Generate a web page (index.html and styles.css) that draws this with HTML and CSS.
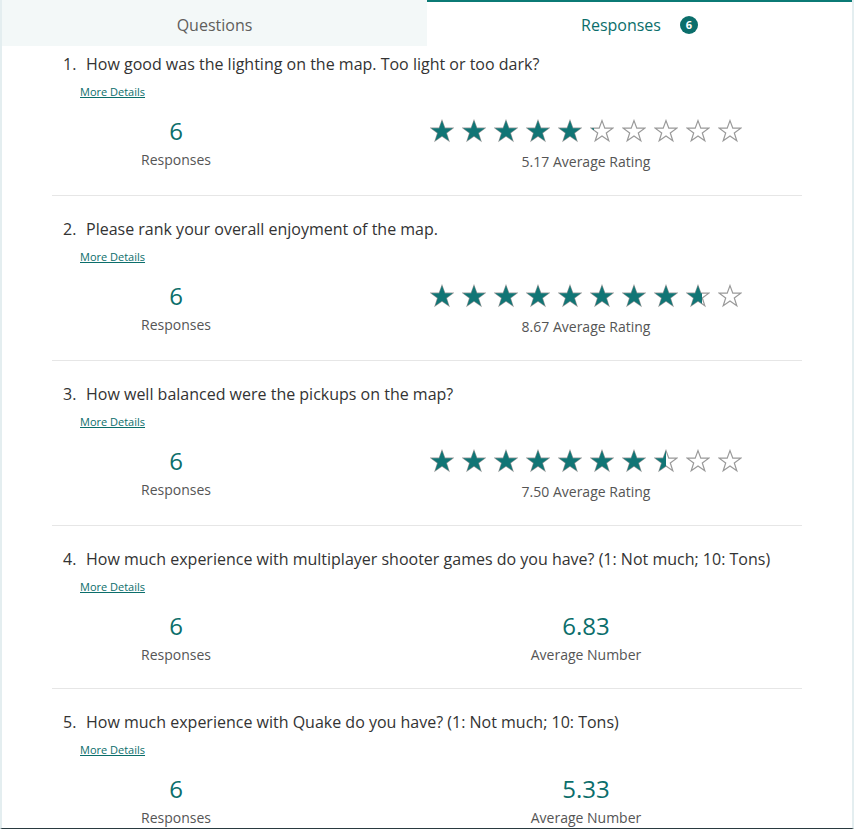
FILE: index.html
```html
<!DOCTYPE html>
<html>
<head>
<meta charset="utf-8">
<link rel="stylesheet" href="styles.css">
</head>
<body>
<div class="frame">
  <div class="tabs">
    <div class="tab tab-questions">Questions</div>
    <div class="tab tab-responses">Responses <span class="badge">6</span></div>
  </div>
  <div class="list">
    <div class="item">
      <div class="q"><span class="qn">1.</span>How good was the lighting on the map. Too light or too dark?</div>
      <a class="more">More Details</a>
      <div class="stats">
        <div class="col col-left"><div class="big">6</div><div class="label">Responses</div></div>
        <div class="col col-right">
          <div class="stars" data-rating="5.17"></div>
          <div class="label label-rating">5.17 Average Rating</div>
        </div>
      </div>
    </div>
    <div class="item">
      <div class="q"><span class="qn">2.</span>Please rank your overall enjoyment of the map.</div>
      <a class="more">More Details</a>
      <div class="stats">
        <div class="col col-left"><div class="big">6</div><div class="label">Responses</div></div>
        <div class="col col-right">
          <div class="stars" data-rating="8.67"></div>
          <div class="label label-rating">8.67 Average Rating</div>
        </div>
      </div>
    </div>
    <div class="item">
      <div class="q"><span class="qn">3.</span>How well balanced were the pickups on the map?</div>
      <a class="more">More Details</a>
      <div class="stats">
        <div class="col col-left"><div class="big">6</div><div class="label">Responses</div></div>
        <div class="col col-right">
          <div class="stars" data-rating="7.50"></div>
          <div class="label label-rating">7.50 Average Rating</div>
        </div>
      </div>
    </div>
    <div class="item">
      <div class="q"><span class="qn">4.</span>How much experience with multiplayer shooter games do you have? (1: Not much; 10: Tons)</div>
      <a class="more">More Details</a>
      <div class="stats">
        <div class="col col-left"><div class="big">6</div><div class="label">Responses</div></div>
        <div class="col col-right"><div class="big">6.83</div><div class="label">Average Number</div></div>
      </div>
    </div>
    <div class="item">
      <div class="q"><span class="qn">5.</span>How much experience with Quake do you have? (1: Not much; 10: Tons)</div>
      <a class="more">More Details</a>
      <div class="stats">
        <div class="col col-left"><div class="big">6</div><div class="label">Responses</div></div>
        <div class="col col-right"><div class="big">5.33</div><div class="label">Average Number</div></div>
      </div>
    </div>
  </div>
</div>
<script src="script.js"></script>
</body>
</html>
```
FILE: styles.css
```css
html, body { margin: 0; padding: 0; background: #fff; }
body { font-family: "Open Sans", "Noto Sans", sans-serif; color: #333; }
.frame {
  width: 850px; height: 828px; overflow: hidden;
  border-left: 2px solid #e4eef0; border-right: 2px solid #e4eef0;
  border-bottom: 1px solid #2a3a40;
  background: #fff;
}
.tabs { display: flex; height: 46px; }
.tab { flex: 1; display: flex; align-items: center; justify-content: center; font-size: 16px; box-sizing: border-box; padding-top: 3px; }
.tab-questions { background: #f3f8f8; color: #605e5c; }
.tab-responses { border-top: 2px solid #0b7a75; color: #0b6e6b; padding-top: 1px; }
.badge {
  display: inline-flex; align-items: center; justify-content: center;
  width: 18px; height: 18px; border-radius: 50%; background: #0b6e6b; color: #fff;
  font-size: 11px; font-weight: 700; margin-left: 19px;
}
.list { padding: 0 50px; }
.item { padding: 23px 0 23px; border-bottom: 1px solid #e6e6e6; }
.item:first-child { padding-top: 8px; }
.q { font-size: 16px; line-height: 20px; color: #333; padding-left: 11px; white-space: nowrap; }
.qn { display: inline-block; width: 23px; }
.more { display: block; width: max-content; margin: 11px 0 0 28px; font-size: 11px; line-height: 14px; color: #0b6e6b; text-decoration: underline; }
.stats { display: flex; gap: 124px; margin-top: 16px; }
.col { display: flex; flex-direction: column; align-items: center; }
.col-left { width: 248px; }
.col-right { width: 324px; }
.big { font-size: 24px; line-height: 32px; color: #0b6e6b; }
.label { font-size: 14px; line-height: 20px; color: #555; margin-top: 3px; }
.label-rating { margin-top: 5px; }
.stars { display: flex; gap: 8px; height: 32px; align-items: center; }
.star { position: relative; width: 24px; height: 24px; }
.star svg { display: block; width: 24px; height: 24px; }
.star .fill { position: absolute; left: 0; top: 0; height: 24px; overflow: hidden; }
.star .outline polygon { fill: none; stroke: #999; stroke-width: 1.2; }
.star .fill polygon { fill: #117575; }
```
FILE: script.js
```js
var P = "12,1.6 14.8,9.2 22.8,9.2 16.3,13.9 18.8,21.8 12,16.9 5.2,21.8 7.7,13.9 1.2,9.2 9.2,9.2";
document.querySelectorAll('.stars').forEach(function (el) {
  var r = parseFloat(el.getAttribute('data-rating'));
  var html = '';
  for (var i = 0; i < 10; i++) {
    var f = Math.max(0, Math.min(1, r - i));
    html += '<span class="star"><svg class="outline" viewBox="0 0 24 24"><polygon points="' + P + '"/></svg>' +
      '<span class="fill" style="width:' + (f * 24).toFixed(1) + 'px"><svg viewBox="0 0 24 24"><polygon points="' + P + '"/></svg></span></span>';
  }
  el.innerHTML = html;
});
```
